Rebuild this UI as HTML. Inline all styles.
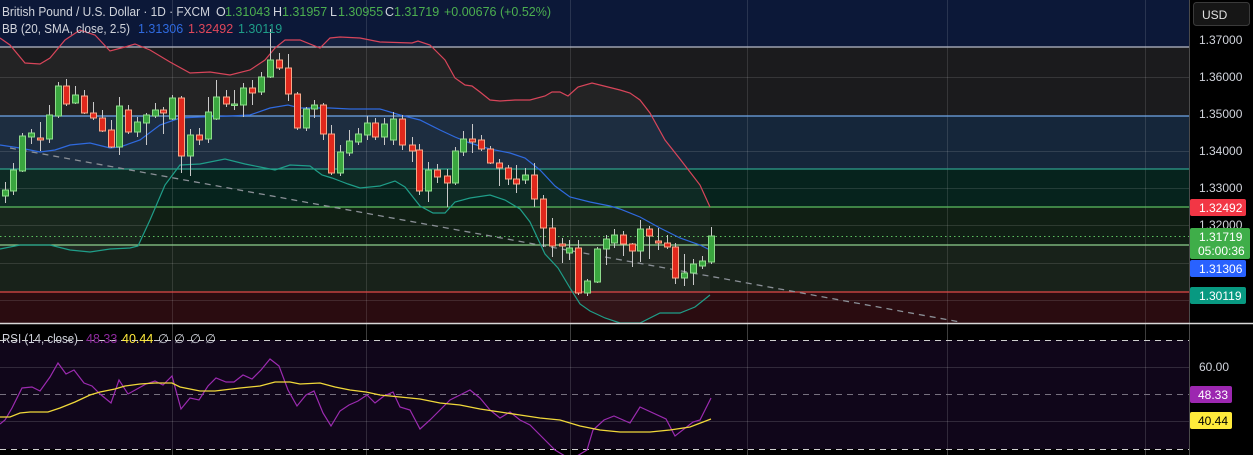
<!DOCTYPE html>
<html><head><meta charset="utf-8"><style>
html,body{margin:0;padding:0;background:#000;width:1253px;height:455px;overflow:hidden}
svg{display:block}
text{font-family:"Liberation Sans",sans-serif}
</style></head><body>
<svg id="s" width="1253" height="455" xmlns="http://www.w3.org/2000/svg">
<rect width="1253" height="455" fill="#000"/>
<rect x="0" y="0" width="1189" height="47" fill="#0c1838"/>
<rect x="0" y="47" width="1189" height="69" fill="#1b1b1d"/>
<rect x="0" y="116" width="1189" height="53" fill="#15263a"/>
<rect x="0" y="169" width="1189" height="38" fill="#06231d"/>
<rect x="0" y="207" width="1189" height="38" fill="#101f14"/>
<rect x="0" y="245" width="1189" height="47" fill="#18221a"/>
<rect x="0" y="292" width="1189" height="31" fill="#2a0c10"/>
<g id="bbfill"></g>
<g stroke="#ffffff" stroke-opacity="0.12" stroke-width="1">
<line x1="0" y1="77.5" x2="1189" y2="77.5"/><line x1="0" y1="151.5" x2="1189" y2="151.5"/><line x1="0" y1="188.5" x2="1189" y2="188.5"/><line x1="0" y1="225.5" x2="1189" y2="225.5"/><line x1="0" y1="263.5" x2="1189" y2="263.5"/><line x1="0" y1="300.5" x2="1189" y2="300.5"/>
<line x1="172.5" y1="0" x2="172.5" y2="455"/><line x1="366.5" y1="0" x2="366.5" y2="455"/><line x1="570.5" y1="0" x2="570.5" y2="455"/><line x1="747.5" y1="0" x2="747.5" y2="455"/><line x1="947.5" y1="0" x2="947.5" y2="455"/><line x1="1145.5" y1="0" x2="1145.5" y2="455"/>
</g>
<g stroke-width="1.2">
<line x1="0" y1="47" x2="1189" y2="47" stroke="#b8bcc8"/>
<line x1="0" y1="116" x2="1189" y2="116" stroke="#6fa6e8"/>
<line x1="0" y1="169" x2="1189" y2="169" stroke="#2fa08a"/>
<line x1="0" y1="207" x2="1189" y2="207" stroke="#5cbf60"/>
<line x1="0" y1="245" x2="1189" y2="245" stroke="#8ed08e"/>
<line x1="0" y1="292" x2="1189" y2="292" stroke="#e04848"/>
</g>
<line x1="0" y1="236.5" x2="1189" y2="236.5" stroke="#5cbf60" stroke-dasharray="1.5,3"/>
<line x1="10" y1="148" x2="960" y2="322" stroke="#8a8f96" stroke-width="1.3" stroke-dasharray="6,5"/>
<g id="bands" fill="none" stroke-width="1.2"></g>
<g id="candles"></g>
<line x1="0" y1="323.5" x2="1253" y2="323.5" stroke="#d8d8d8" stroke-width="1.5"/>
<rect x="0" y="340" width="1189" height="109" fill="#10061a"/>
<g stroke="#ffffff" stroke-opacity="0.14"><line x1="0" y1="367.5" x2="1189" y2="367.5"/><line x1="0" y1="421.5" x2="1189" y2="421.5"/>
<line x1="172.5" y1="324" x2="172.5" y2="455"/><line x1="366.5" y1="324" x2="366.5" y2="455"/><line x1="570.5" y1="324" x2="570.5" y2="455"/><line x1="747.5" y1="324" x2="747.5" y2="455"/><line x1="947.5" y1="324" x2="947.5" y2="455"/><line x1="1145.5" y1="324" x2="1145.5" y2="455"/></g>
<g stroke-dasharray="6,5"><line x1="0" y1="340.5" x2="1189" y2="340.5" stroke="#cfcfcf"/><line x1="0" y1="394.5" x2="1189" y2="394.5" stroke="#77707f"/><line x1="0" y1="449.5" x2="1189" y2="449.5" stroke="#cfcfcf"/></g>
<polyline fill="none" stroke="#9c2bb0" stroke-width="1.2" points="0,424 5,420 12,408 22,388 32,387 40,391 50,377 58,363 66,374 74,370 84,383 92,386 100,394 111,403 119,380 128,394 137,389 146,384 155,381 163,385 172,376 181,409 190,398 199,400 208,386 216,378 226,382 234,382 243,375 252,379 261,370 270,359 279,366 288,390 297,406 306,395 314,391 323,413 331,426 340,411 349,405 358,401 367,395 375,403 384,396 393,392 400,407 410,410 420,429 430,420 440,410 450,400 460,395 470,390 480,398 490,410 500,418 510,412 520,420 530,425 545,440 555,450 565,456 577,456 587,450 593,430 604,420 614,416 630,423 640,407 666,419 675,436 693,422 700,420 711,398"/>
<polyline fill="none" stroke="#f0d83a" stroke-width="1.3" points="0,417 10,417 20,413 30,412 48,412 60,408 75,402 90,395 100,392 115,389 125,386 140,384 155,383 172,383 180,387 200,391 215,391 240,388 260,386 275,382 290,382 300,384 320,383 335,387 350,390 366,392 380,395 400,397 420,399 440,403 460,405 480,409 500,412 520,415 540,418 560,420 580,426 600,430 620,432 650,432 670,430 690,427 711,419"/>
<rect x="1190" y="0" width="63" height="455" fill="#000"/>
<line x1="1189.5" y1="0" x2="1189.5" y2="455" stroke="#4a4a4a"/>
<line x1="1189" y1="323.5" x2="1253" y2="323.5" stroke="#d8d8d8" stroke-width="1.5"/>
<rect x="1193.5" y="2.5" width="56" height="23" rx="3" fill="#161616" stroke="#3a3a3a"/>
<text x="1202" y="19" fill="#e0e0e0" font-size="12">USD</text>
<g fill="#d1d4dc" font-size="12">
<text x="1199" y="44">1.37000</text><text x="1199" y="81">1.36000</text><text x="1199" y="118">1.35000</text><text x="1199" y="155">1.34000</text><text x="1199" y="192">1.33000</text><text x="1199" y="229">1.32000</text>
<text x="1199" y="371">60.00</text></g>
<rect x="1190" y="199" width="56" height="17" rx="2" fill="#f23645"/><text x="1199" y="212" fill="#fff" font-size="12">1.32492</text>
<rect x="1190" y="228" width="60" height="31" rx="2" fill="#3fae49"/><text x="1199" y="241" fill="#fff" font-size="12">1.31719</text><text x="1198" y="255" fill="#fff" font-size="12">05:00:36</text>
<rect x="1190" y="260" width="56" height="17" rx="2" fill="#2962ff"/><text x="1199" y="273" fill="#fff" font-size="12">1.31306</text>
<rect x="1190" y="287" width="56" height="17" rx="2" fill="#089981"/><text x="1199" y="300" fill="#fff" font-size="12">1.30119</text>
<rect x="1190" y="386" width="42" height="17" rx="2" fill="#9c27b0"/><text x="1198" y="399" fill="#fff" font-size="12">48.33</text>
<rect x="1190" y="412" width="42" height="17" rx="2" fill="#ffeb3b"/><text x="1198" y="425" fill="#000" font-size="12">40.44</text>
<g font-size="12.5" fill="#d1d4dc">
<text x="2" y="16" textLength="208" lengthAdjust="spacingAndGlyphs">British Pound / U.S. Dollar · 1D · FXCM</text>
<text x="216" y="16">O</text><text x="225" y="16" fill="#4caf50">1.31043</text>
<text x="273" y="16">H</text><text x="282" y="16" fill="#4caf50">1.31957</text>
<text x="330" y="16">L</text><text x="338" y="16" fill="#4caf50">1.30955</text>
<text x="385" y="16">C</text><text x="394" y="16" fill="#4caf50">1.31719</text>
<text x="444" y="16" fill="#4caf50">+0.00676 (+0.52%)</text>
<text x="2" y="33" textLength="128" lengthAdjust="spacingAndGlyphs">BB (20, SMA, close, 2.5)</text>
<text x="138" y="33" fill="#2f6adf">1.31306</text><text x="188" y="33" fill="#e0475a">1.32492</text><text x="238" y="33" fill="#1f9e89">1.30119</text>
<text x="2" y="343" textLength="76" lengthAdjust="spacingAndGlyphs">RSI (14, close)</text>
<text x="86" y="343" fill="#8e2a9e">48.33</text><text x="122" y="343" fill="#ffeb3b">40.44</text>
<text x="158" y="343">∅</text><text x="174" y="343">∅</text><text x="190" y="343">∅</text><text x="205" y="343">∅</text>
</g>
</svg>
<script>
var NS="http://www.w3.org/2000/svg";
function el(p,t,a){var e=document.createElementNS(NS,t);for(var k in a)e.setAttribute(k,a[k]);p.appendChild(e);return e;}
var up=[[0,38],[10,45],[25,63],[40,64],[50,58],[65,40],[80,30],[95,35],[110,51],[125,47],[135,44],[150,50],[170,62],[190,73],[210,72],[230,75],[250,70],[265,60],[275,48],[285,40],[300,40],[320,48],[330,38],[340,37],[360,38],[380,42],[412,43],[418,41],[430,45],[445,60],[455,78],[465,85],[472,86],[480,92],[490,100],[500,101],[515,100],[530,100],[545,96],[552,92],[560,92],[568,96],[578,87],[592,83],[600,85],[620,90],[630,93],[640,100],[650,113],[665,140],[680,159],[690,172],[700,185],[710,207]];
var mid=[[0,145],[20,148],[40,152],[55,150],[70,145],[90,143],[110,148],[120,147],[140,140],[160,125],[180,118],[200,117],[230,116],[250,115],[270,108],[288,105],[300,108],[330,108],[350,109],[380,109],[400,115],[420,120],[440,130],[455,137],[470,143],[490,149],[510,153],[525,158],[540,170],[555,186],[570,197],[590,202],[610,206],[620,209],[640,217],[660,228],[680,238],[700,245],[710,250]];
var low=[[0,249],[20,245],[50,245],[70,250],[90,252],[110,249],[130,248],[138,246],[150,220],[165,185],[180,165],[200,164],[225,159],[245,164],[260,167],[275,170],[290,165],[310,166],[322,175],[332,178],[340,181],[348,184],[360,188],[380,186],[395,181],[400,184],[405,187],[420,206],[433,213],[445,213],[455,202],[470,198],[490,195],[505,200],[520,209],[530,222],[545,254],[558,268],[570,288],[580,304],[590,311],[605,318],[620,323],[640,323],[660,313],[680,313],[695,307],[710,295]];
function pts(a){return a.map(function(p){return p.join(",")}).join(" ");}
el(document.getElementById("bbfill"),"polygon",{points:pts(up.concat(low.slice().reverse())),fill:"#ffffff","fill-opacity":"0.035"});
var b=document.getElementById("bands");
el(b,"polyline",{points:pts(up),stroke:"#d8455a"});
el(b,"polyline",{points:pts(mid),stroke:"#2f6adf"});
el(b,"polyline",{points:pts(low),stroke:"#1f9e89"});
var C=[[5,190,196,182,203,1],[13,170,191,163,195,1],[22,136,171,133,172,1],[31,133,137,129,144,1],[40,138,140,122,151,0],[49,115,139,105,143,1],[58,86,116,82,118,1],[66,86,104,79,106,0],[75,95,103,86,104,1],[84,96,113,90,114,0],[93,113,118,102,120,0],[102,118,131,110,132,0],[111,130,147,120,148,0],[119,106,147,97,155,1],[128,110,132,105,134,0],[137,122,132,117,137,1],[146,115,123,113,145,1],[155,110,116,103,118,1],[163,110,113,107,134,0],[172,98,119,95,120,1],[181,98,156,96,173,0],[190,135,156,129,176,1],[199,135,140,128,145,0],[208,112,139,97,143,1],[216,97,119,80,120,1],[226,97,104,90,107,0],[234,104,105,90,110,1],[243,88,105,83,117,1],[252,88,93,80,105,0],[261,77,92,72,95,1],[270,60,77,29,78,1],[279,60,68,53,70,0],[288,68,94,54,101,0],[297,94,128,92,130,0],[306,109,128,107,131,1],[314,105,109,100,118,1],[323,105,134,103,140,0],[331,134,173,125,175,0],[340,152,173,145,176,1],[349,141,153,130,156,1],[358,134,142,128,145,1],[367,123,135,116,140,1],[375,123,137,118,140,0],[384,124,137,118,145,1],[393,119,140,112,145,1],[402,119,145,115,150,0],[412,145,151,137,162,0],[419,150,191,144,195,0],[428,170,191,162,202,1],[437,170,177,164,183,0],[447,176,183,169,207,0],[455,151,183,147,185,1],[463,139,152,131,156,1],[472,139,142,124,153,0],[481,140,149,135,151,0],[490,149,163,146,164,0],[499,163,168,159,186,0],[508,168,179,165,185,0],[516,179,184,165,193,0],[525,175,180,168,184,1],[534,175,199,163,207,0],[543,199,228,195,247,0],[552,228,246,218,257,0],[562,244,246,238,263,0],[569,248,253,240,260,1],[578,248,293,240,295,0],[587,281,293,279,296,1],[597,249,282,247,283,1],[606,239,249,235,265,1],[614,235,243,229,248,1],[623,235,244,231,256,0],[632,244,251,243,267,0],[640,229,251,220,262,1],[649,229,236,226,259,0],[658,241,243,228,250,0],[667,243,247,235,249,0],[675,247,278,243,284,0],[684,273,278,254,286,1],[693,264,273,259,285,1],[702,261,266,256,269,1],[711,236,262,227,264,1]];
var g=document.getElementById("candles");
C.forEach(function(c){
 el(g,"line",{x1:c[0]+0.5,y1:c[3],x2:c[0]+0.5,y2:c[4],stroke:"#c9c9c9","stroke-width":1});
 var h=Math.max(c[2]-c[1],1.5);
 el(g,"rect",{x:c[0]-2.5,y:c[1],width:6,height:h,fill:c[5]?"#3aa63f":"#e0281c",stroke:c[5]?"#8fdc8c":"#f6a98a","stroke-width":1});
});
</script>
</body></html>
